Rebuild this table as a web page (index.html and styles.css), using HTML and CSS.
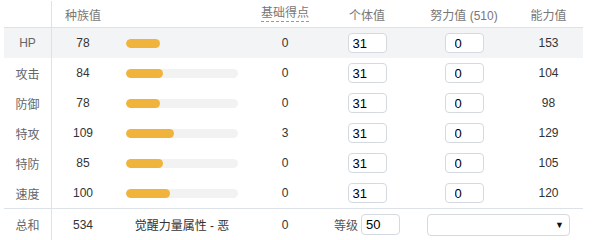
FILE: index.html
```html
<!DOCTYPE html>
<html lang="zh">
<head>
<meta charset="utf-8">
<link rel="stylesheet" href="styles.css">
</head>
<body>
<div class="stats">
  <div class="row head">
    <div class="c label"></div>
    <div class="c base">种族值</div>
    <div class="c bar"></div>
    <div class="c ev-base"><span class="dashed">基础得点</span></div>
    <div class="c iv">个体值</div>
    <div class="c ev">努力值 (510)</div>
    <div class="c stat">能力值</div>
  </div>

  <div class="row alt">
    <div class="c label">HP</div>
    <div class="c base num">78</div>
    <div class="c bar"><div class="track"><div class="fill" style="width:34px"></div></div></div>
    <div class="c ev-base num">0</div>
    <div class="c iv"><input class="box" value="31"></div>
    <div class="c ev"><input class="box ev-box" value="0"></div>
    <div class="c stat num">153</div>
  </div>

  <div class="row">
    <div class="c label">攻击</div>
    <div class="c base num">84</div>
    <div class="c bar"><div class="track"><div class="fill" style="width:37px"></div></div></div>
    <div class="c ev-base num">0</div>
    <div class="c iv"><input class="box" value="31"></div>
    <div class="c ev"><input class="box ev-box" value="0"></div>
    <div class="c stat num">104</div>
  </div>

  <div class="row">
    <div class="c label">防御</div>
    <div class="c base num">78</div>
    <div class="c bar"><div class="track"><div class="fill" style="width:34px"></div></div></div>
    <div class="c ev-base num">0</div>
    <div class="c iv"><input class="box" value="31"></div>
    <div class="c ev"><input class="box ev-box" value="0"></div>
    <div class="c stat num">98</div>
  </div>

  <div class="row">
    <div class="c label">特攻</div>
    <div class="c base num">109</div>
    <div class="c bar"><div class="track"><div class="fill" style="width:48px"></div></div></div>
    <div class="c ev-base num">3</div>
    <div class="c iv"><input class="box" value="31"></div>
    <div class="c ev"><input class="box ev-box" value="0"></div>
    <div class="c stat num">129</div>
  </div>

  <div class="row">
    <div class="c label">特防</div>
    <div class="c base num">85</div>
    <div class="c bar"><div class="track"><div class="fill" style="width:37px"></div></div></div>
    <div class="c ev-base num">0</div>
    <div class="c iv"><input class="box" value="31"></div>
    <div class="c ev"><input class="box ev-box" value="0"></div>
    <div class="c stat num">105</div>
  </div>

  <div class="row">
    <div class="c label">速度</div>
    <div class="c base num">100</div>
    <div class="c bar"><div class="track"><div class="fill" style="width:44px"></div></div></div>
    <div class="c ev-base num">0</div>
    <div class="c iv"><input class="box" value="31"></div>
    <div class="c ev"><input class="box ev-box" value="0"></div>
    <div class="c stat num">120</div>
  </div>

  <div class="row total">
    <div class="c label">总和</div>
    <div class="c base num">534</div>
    <div class="c bar hp-type">觉醒力量属性 - 恶</div>
    <div class="c ev-base num">0</div>
    <div class="c iv level"><span class="lv-label">等级</span><input class="box" value="50"></div>
    <div class="c wide"><div class="select"><span class="arrow">▼</span></div></div>
  </div>
</div>
</body>
</html>
```

FILE: styles.css
```css
* { box-sizing: border-box; }
html, body { margin: 0; padding: 0; background: #fff; }
body {
  font-family: "Liberation Sans", "Noto Sans CJK SC", sans-serif;
  font-size: 12px;
  color: #333;
}
.stats {
  width: 579px;
  margin-left: 4px;
}
.row {
  display: grid;
  grid-template-columns: 48px 62px 136px 70px 94px 100px 69px;
  height: 30px;
  align-items: center;
}
.row.head {
  height: 28px;
  padding-top: 1px;
  border-bottom: 1px solid #dde1e8;
  color: #777;
}
.row.alt { background: #f3f4f6; }
.row.total {
  height: 32px;
  border-top: 1px solid #dde1e8;
}
.c {
  height: 100%;
  display: flex;
  align-items: center;
  justify-content: center;
}
.label {
  color: #666;
  border-right: 1px solid #dde1e8;
}
.num { color: #333; }
.dashed {
  border-bottom: 1px dashed #999;
  line-height: 14px;
  padding-bottom: 1px;
}
.bar { padding: 0 12px; }
.track {
  width: 112px;
  height: 9px;
  border-radius: 5px;
  background: #f2f2f2;
  overflow: hidden;
}
.row.alt .track { background: transparent; }
.fill {
  height: 100%;
  border-radius: 5px;
  background: #f0b43c;
}
.box {
  width: 39px;
  height: 20px;
  border: 1px solid #d5d9e0;
  border-radius: 4px;
  background: #fff;
  padding: 0 4px;
  font-family: "Liberation Sans", sans-serif;
  font-size: 13px;
  color: #000;
  outline: none;
}
.ev-box { padding-left: 9px; }
.hp-type { padding: 0; color: #333; }
.level { gap: 3px; }
.lv-label { color: #555; }
.level .box { height: 21px; }
.wide { grid-column: span 2; }
.select {
  width: 143px;
  height: 22px;
  border: 1px solid #d5d9e0;
  border-radius: 4px;
  background: #fff;
  display: flex;
  align-items: center;
  justify-content: flex-end;
  padding-right: 5px;
}
.arrow { font-size: 9px; color: #111; }
```
